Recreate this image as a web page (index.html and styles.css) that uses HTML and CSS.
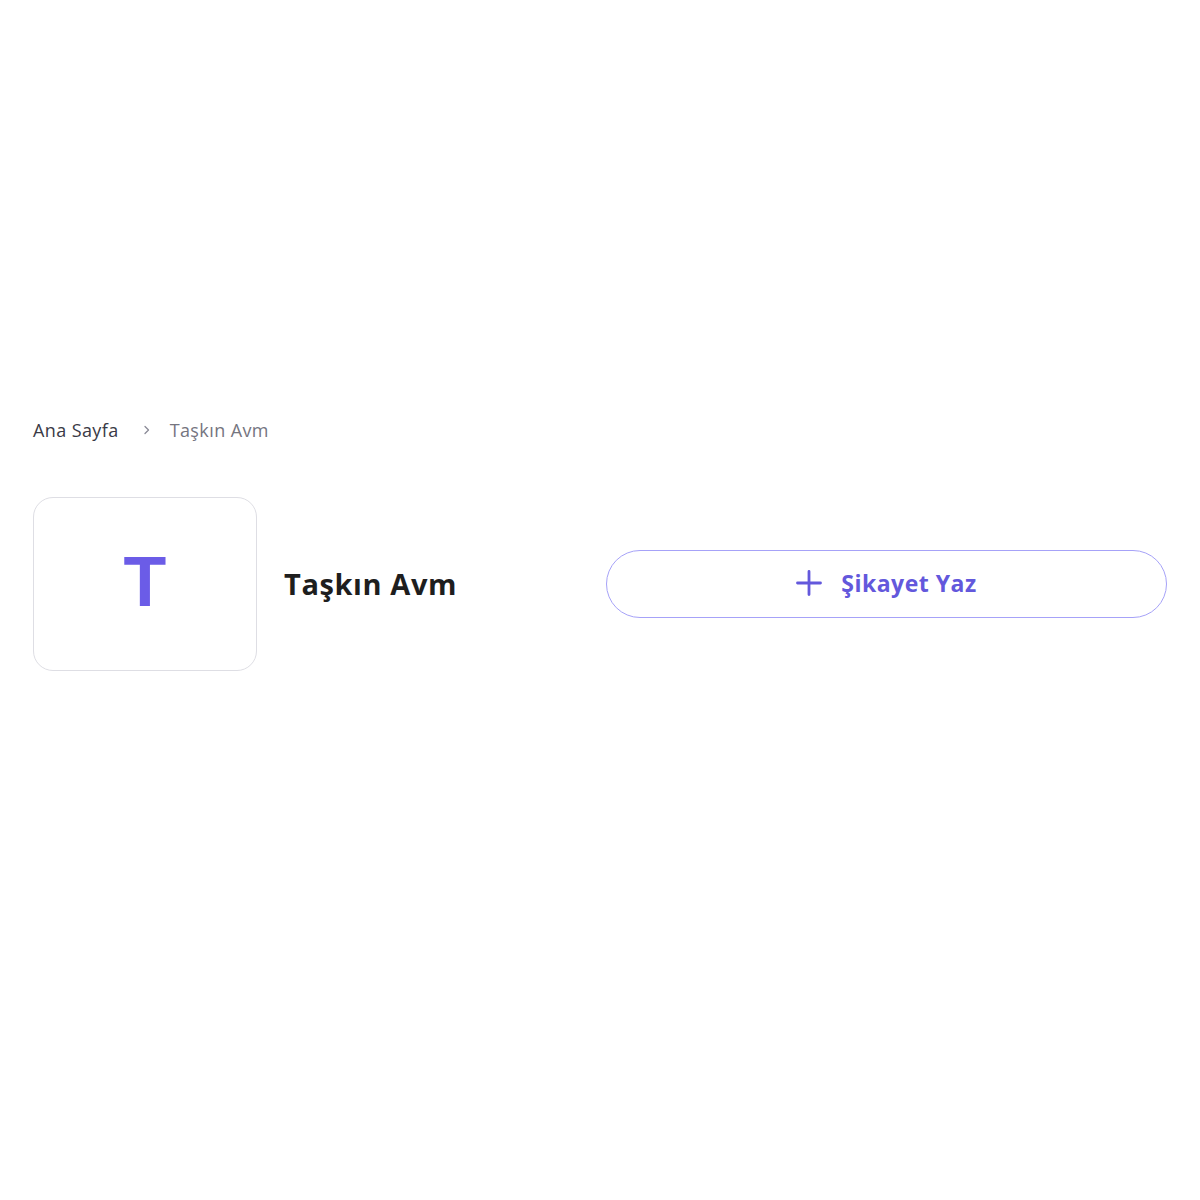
FILE: index.html
```html
<!DOCTYPE html>
<html lang="tr">
<head>
    <meta charset="UTF-8">
    <meta name="viewport" content="width=device-width, initial-scale=1.0">
    <title>Taşkın Avm</title>
    <link rel="stylesheet" href="styles.css">
</head>
<body>
    <div class="page">
        <nav class="breadcrumb">
            <a href="#" class="crumb">Ana Sayfa</a>
            <svg class="sep" width="10" height="10" viewBox="0 0 10 10"><path d="M3 1.5 L6.5 5 L3 8.5" fill="none" stroke="#8a8a96" stroke-width="1.3" stroke-linecap="round" stroke-linejoin="round"/></svg>
            <span class="crumb current">Taşkın Avm</span>
        </nav>

        <div class="brand-row">
            <div class="brand">
                <div class="logo-box">T</div>
                <h1>Taşkın Avm</h1>
            </div>
            <button class="btn-complaint">
                <svg width="26" height="26" viewBox="0 0 26 26"><path d="M13 1.5 V24.5 M1.5 13 H24.5" stroke="#6358dc" stroke-width="2.8" stroke-linecap="round"/></svg>
                <span>Şikayet Yaz</span>
            </button>
        </div>
    </div>
</body>
</html>
```

FILE: styles.css
```css
* {
    margin: 0;
    padding: 0;
    box-sizing: border-box;
}

body {
    font-family: 'Open Sans', 'Noto Sans', sans-serif;
    background: #fff;
    color: #1f1f1f;
}

.page {
    padding: 416px 33px 0 33px;
}

.breadcrumb {
    display: flex;
    align-items: center;
    font-size: 18px;
    letter-spacing: 0.4px;
    height: 28px;
}

.crumb {
    text-decoration: none;
    color: #3a3a46;
}

.crumb.current {
    color: #75757f;
}

.sep {
    margin: 0 18px 0 23px;
}

.brand-row {
    display: flex;
    align-items: center;
    justify-content: space-between;
    margin-top: 53px;
}

.brand {
    display: flex;
    align-items: center;
    gap: 27px;
}

.logo-box {
    width: 224px;
    height: 174px;
    border: 1px solid #dedee4;
    border-radius: 20px;
    display: flex;
    align-items: center;
    justify-content: center;
    font-family: 'Liberation Sans', sans-serif;
    font-size: 70px;
    font-weight: 700;
    color: #6b5ce7;
    padding-bottom: 4px;
}

h1 {
    font-size: 29px;
    font-weight: 700;
    letter-spacing: 0.6px;
    color: #1e1e1e;
    margin-top: -2px;
}

.btn-complaint {
    width: 561px;
    height: 68px;
    background: #fff;
    border: 1.5px solid #a6a2f8;
    border-radius: 34px;
    display: flex;
    align-items: center;
    justify-content: center;
    gap: 19px;
    padding-bottom: 2px;
    font-family: inherit;
    font-size: 23px;
    font-weight: 700;
    letter-spacing: 0.5px;
    color: #6358dc;
    cursor: pointer;
}
```
